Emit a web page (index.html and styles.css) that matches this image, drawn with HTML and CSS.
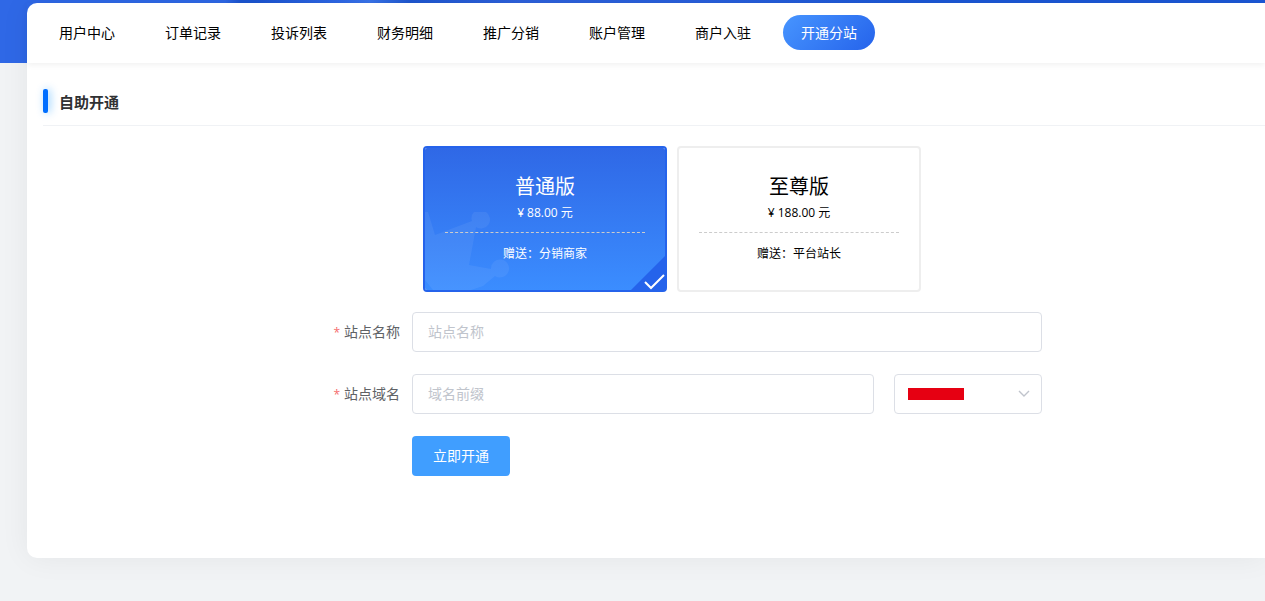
FILE: index.html
```html
<!DOCTYPE html>
<html lang="zh-CN">
<head>
<meta charset="utf-8">
<meta name="viewport" content="width=device-width, initial-scale=1">
<title>开通分站</title>
<link rel="stylesheet" href="styles.css">
</head>
<body>
<div class="page">
  <main class="panel">
    <nav class="nav">
      <a class="nav-link" href="#">用户中心</a>
      <a class="nav-link" href="#">订单记录</a>
      <a class="nav-link" href="#">投诉列表</a>
      <a class="nav-link" href="#">财务明细</a>
      <a class="nav-link" href="#">推广分销</a>
      <a class="nav-link" href="#">账户管理</a>
      <a class="nav-link" href="#">商户入驻</a>
      <a class="nav-link nav-link-active" href="#" aria-current="page">开通分站</a>
    </nav>
    <section class="content">
      <h1 class="title">自助开通</h1>
      <div class="form-wrap">
        <form class="form">
          <div class="plans">
            <button class="plan plan-active" type="button" aria-pressed="true">
              <svg class="plan-crown" viewBox="0 0 88 80" aria-hidden="true">
                <path d="M0 2H3L10 25L47 11A9 9 0 0 1 49 2H61A9 9 0 0 1 51 17L44 55L66 59A9 9 0 1 1 70 66L58 76L46 80H8L0 70Z"/>
              </svg>
              <span class="plan-name">普通版</span>
              <span class="plan-price">¥ 88.00 元</span>
              <span class="plan-gift">赠送：分销商家</span>
              <svg class="plan-check" viewBox="0 0 36 36" aria-hidden="true">
                <path class="check-corner" d="M36 0V36H0Z"/>
                <path class="check-mark" d="M15 27L21 33L34 20"/>
              </svg>
            </button>
            <button class="plan" type="button" aria-pressed="false">
              <span class="plan-name">至尊版</span>
              <span class="plan-price">¥ 188.00 元</span>
              <span class="plan-gift">赠送：平台站长</span>
            </button>
          </div>
          <div class="row">
            <label class="label" for="site-name"><span class="star">*</span>站点名称</label>
            <input class="input" id="site-name" type="text" placeholder="站点名称">
          </div>
          <div class="row">
            <label class="label" for="site-domain"><span class="star">*</span>站点域名</label>
            <input class="input" id="site-domain" type="text" placeholder="域名前缀">
            <div class="select-wrap">
              <select class="select" aria-label="域名后缀"><option></option></select>
              <span class="mask"></span>
              <svg class="arrow" viewBox="0 0 12 8" aria-hidden="true"><path d="M1 1L6 6L11 1"/></svg>
            </div>
          </div>
          <div class="actions">
            <button class="submit" type="submit">立即开通</button>
          </div>
        </form>
      </div>
    </section>
  </main>
</div>
</body>
</html>
```

FILE: styles.css
```css
* {
  box-sizing: border-box;
}

body {
  margin: 0;
  background: #f1f3f5;
  color: #000;
  font-family: "Open Sans", "Noto Sans CJK SC", sans-serif;
  font-size: 14px;
}

button,
input,
select {
  font: inherit;
}

.page {
  min-height: 100vh;
  padding: 3px 0 43px 27px;
  background-image:
    linear-gradient(90deg, #2f68e6 0, #2f68e6 225px, #1c55d0 240px, #1c55d0 255px, #2f68e6 340px, #3a74ea 370px, #1f58d0 410px, #2f62dc 520px, #2960dc 700px, #1c58d6 920px, #1c58d6 100%);
  background-repeat: no-repeat;
  background-size: 100% 63px;
}

.panel {
  min-height: 555px;
  background: #fff;
  border-radius: 10px 0 0 10px;
  box-shadow: 0 0 30px rgba(0, 0, 0, 0.06);
}

.nav {
  display: flex;
  align-items: center;
  gap: 14px;
  height: 60px;
  padding: 0 14px 2px;
  box-shadow: 0 2px 6px rgba(0, 0, 0, 0.06);
}

.nav-link {
  flex: none;
  padding: 0 18px;
  border-radius: 18px;
  color: #000;
  line-height: 35px;
  text-decoration: none;
}

.nav-link-active {
  background: linear-gradient(135deg, #4795ff, #2563eb);
  color: #fff;
}

.content {
  padding: 16px 0 0 16px;
}

.title {
  display: flex;
  align-items: center;
  gap: 11px;
  height: 47px;
  margin: 0;
  padding-bottom: 2px;
  border-bottom: 1px solid #f0f2f5;
  color: #303133;
  font-size: 15px;
  font-weight: 700;
}

.title::before {
  content: "";
  width: 5px;
  height: 24px;
  border-radius: 2px;
  background: #006eff;
  box-shadow: 2px 0 8px rgba(0, 145, 255, 0.45);
}

.form-wrap {
  padding: 20px 0 0 66px;
}

.form {
  max-width: 710px;
  margin: 0 auto;
}

.plans {
  display: flex;
  gap: 10px;
  margin-bottom: 20px;
  padding-left: 91px;
}

.plan {
  position: relative;
  display: flex;
  flex-direction: column;
  align-items: stretch;
  width: 244px;
  height: 146px;
  padding: 23px 20px 0;
  border: 2px solid #eee;
  border-radius: 4px;
  background: #fff;
  color: #000;
  text-align: center;
}

.plan-active {
  border-color: #2563eb;
  background: linear-gradient(#2f68e6, #3b8dff) padding-box;
  color: #fff;
}

.plan-name,
.plan-price,
.plan-gift {
  position: relative;
}

.plan-name {
  font-size: 20px;
  line-height: 32px;
}

.plan-price {
  padding-bottom: 9px;
  border-bottom: 1px dashed #ccc;
  font-size: 12px;
  line-height: 20px;
}

.plan-gift {
  padding-top: 11px;
  font-size: 12px;
  line-height: 20px;
}

.plan-crown {
  position: absolute;
  left: 0;
  bottom: 0;
  width: 88px;
  height: 80px;
  fill: #fff;
  opacity: 0.06;
}

.plan-check {
  position: absolute;
  right: -1px;
  bottom: -1px;
  width: 36px;
  height: 36px;
}

.check-corner {
  fill: #2563eb;
}

.check-mark {
  fill: none;
  stroke: #fff;
  stroke-width: 2;
}

.row {
  display: flex;
  margin-bottom: 22px;
}

.label {
  flex: none;
  width: 80px;
  padding-right: 12px;
  color: #606266;
  line-height: 40px;
  text-align: right;
}

.star {
  margin-right: 4px;
  color: #f56c6c;
  font-size: 12px;
  line-height: 1;
}

.input,
.select {
  height: 40px;
  border: 1px solid #dcdfe6;
  border-radius: 4px;
  background: #fff;
  color: #606266;
}

.input {
  flex: 1;
  min-width: 0;
  padding: 0 15px 2px;
}

.input::placeholder {
  color: #c0c4cc;
}

.select-wrap {
  position: relative;
  flex: none;
  width: 148px;
  margin-left: 20px;
}

.select {
  display: block;
  width: 100%;
  padding: 0 30px 0 15px;
  appearance: none;
}

.mask {
  position: absolute;
  top: 14px;
  left: 14px;
  width: 56px;
  height: 12px;
  background: #e60012;
  pointer-events: none;
}

.arrow {
  position: absolute;
  top: 16px;
  right: 12px;
  width: 12px;
  height: 8px;
  fill: none;
  stroke: #c0c4cc;
  stroke-width: 1.4;
  pointer-events: none;
}

.actions {
  padding-left: 80px;
}

.submit {
  height: 40px;
  padding: 0 21px 2px;
  border: 0;
  border-radius: 4px;
  background: #409eff;
  color: #fff;
}
```
